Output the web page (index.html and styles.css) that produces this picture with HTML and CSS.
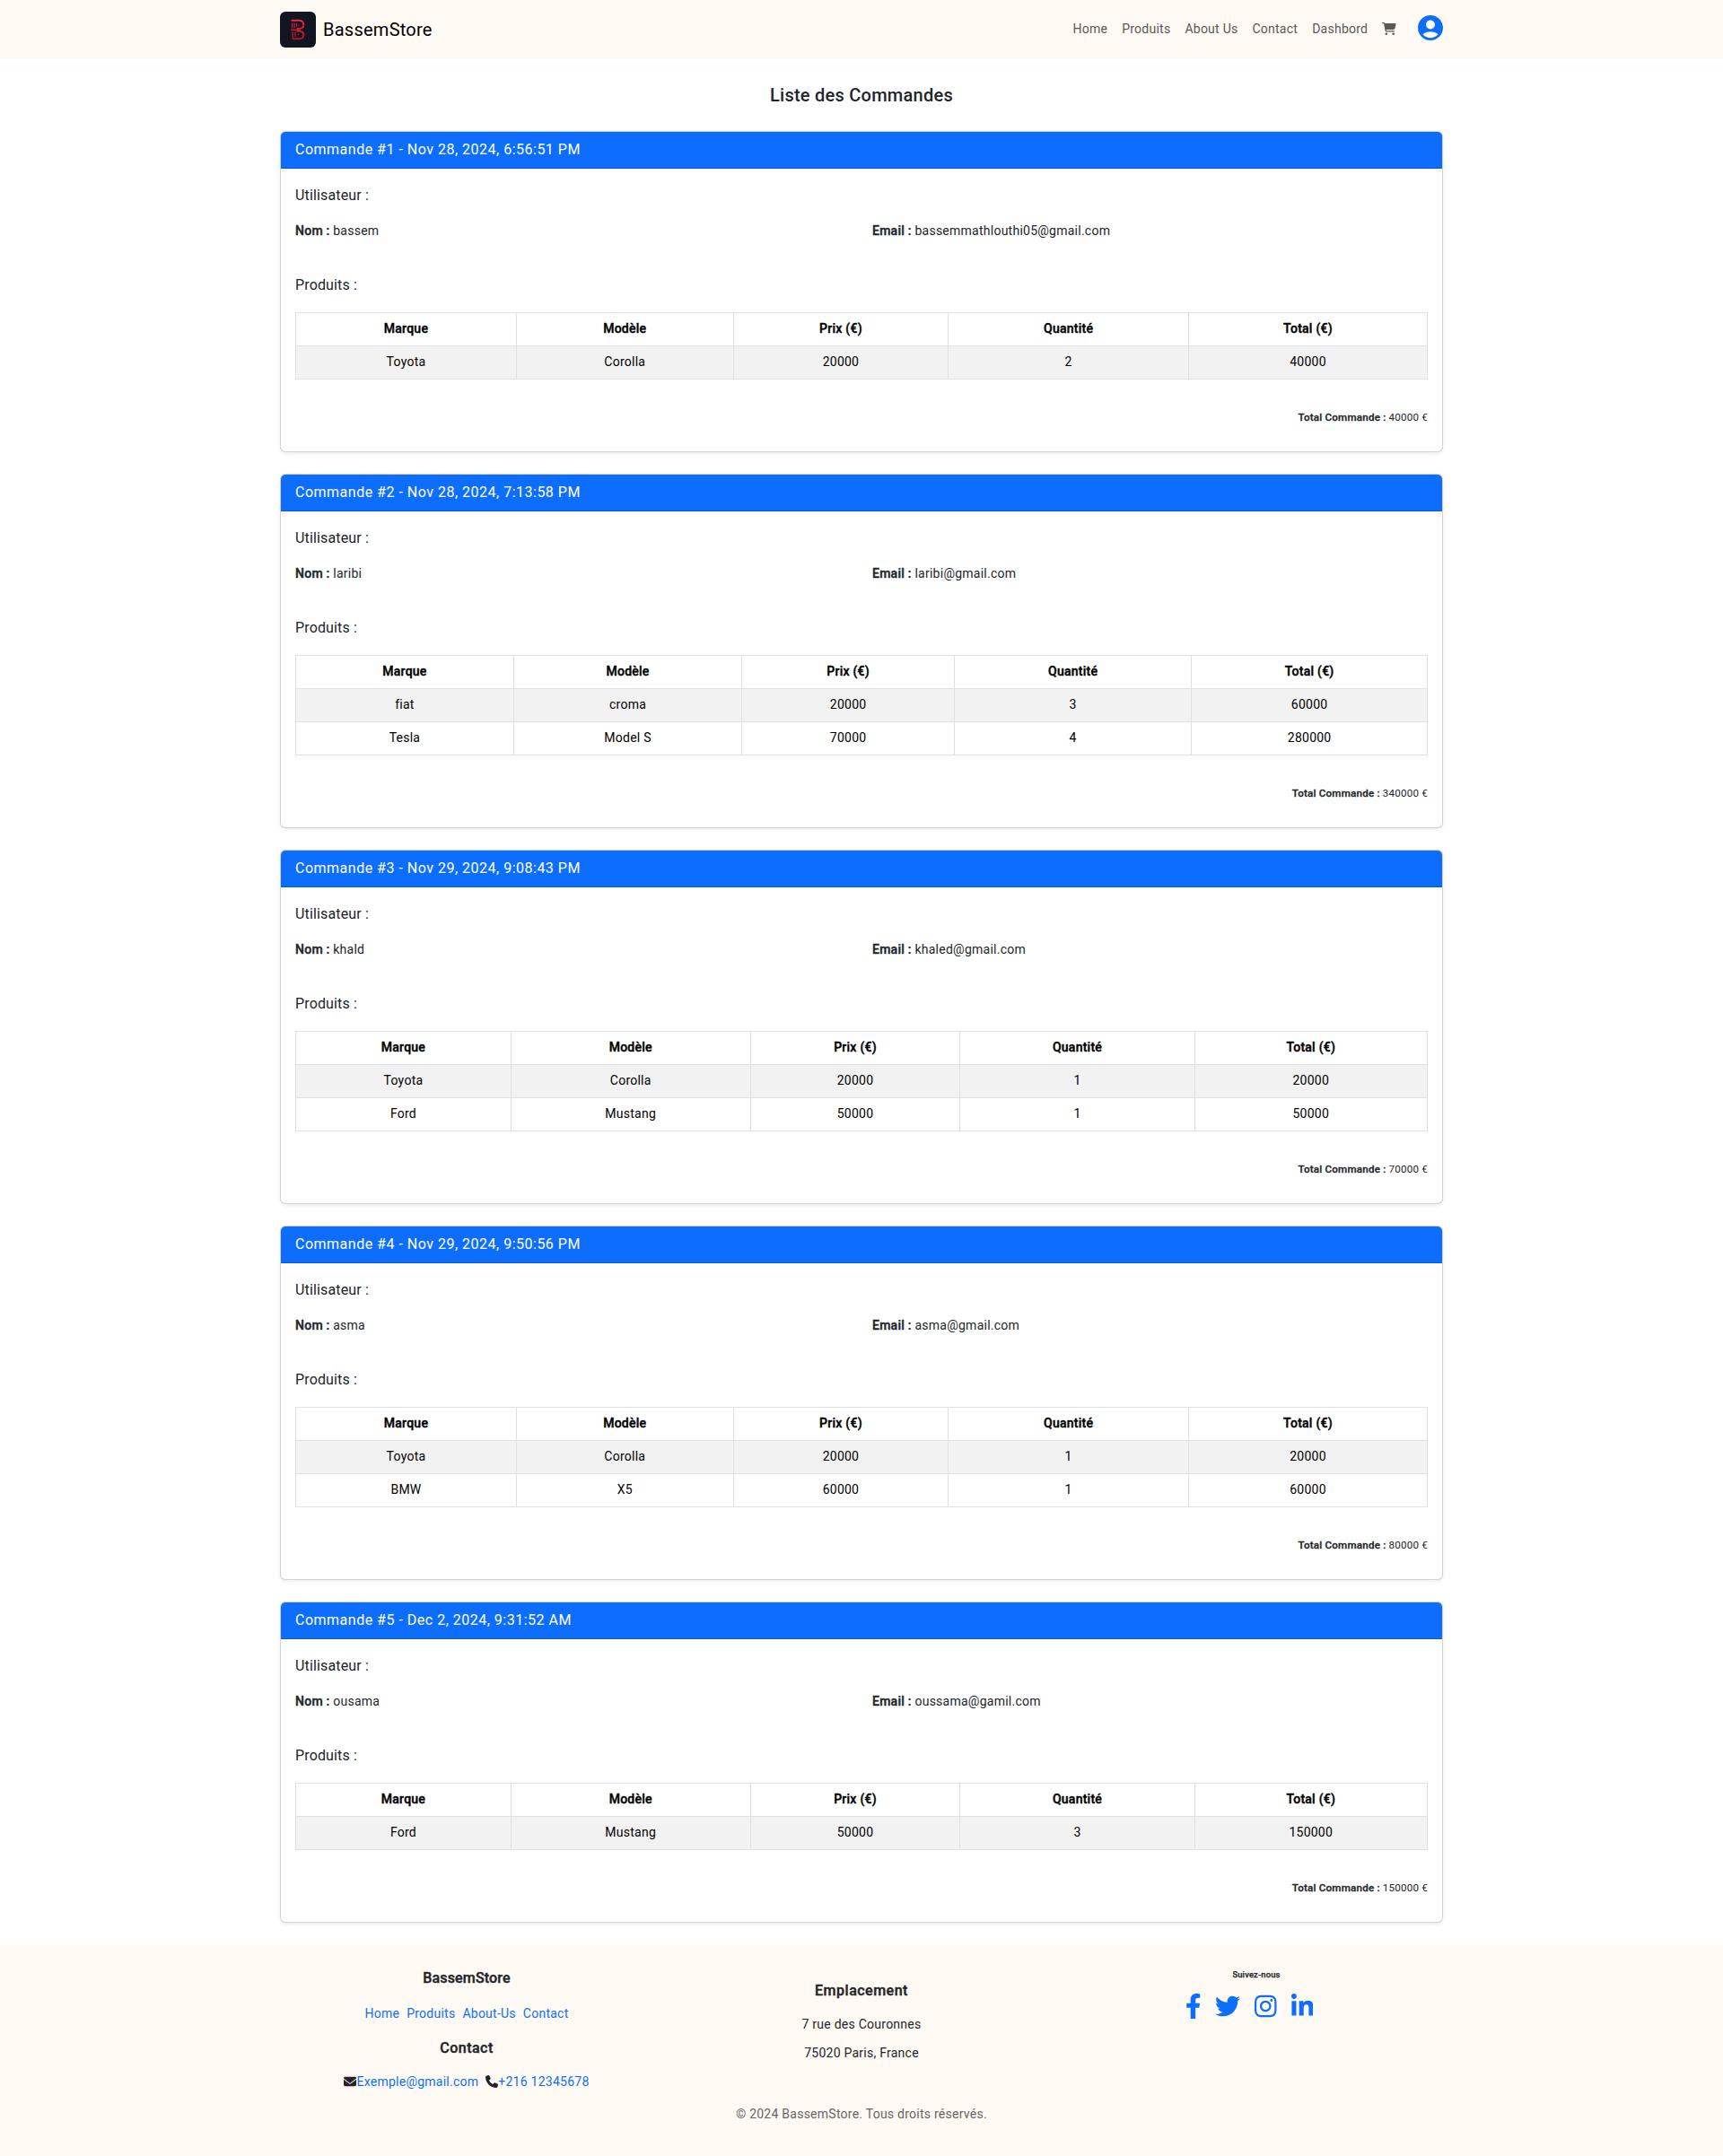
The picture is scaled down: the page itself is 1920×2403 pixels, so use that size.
FILE: index.html
```html
<!DOCTYPE html>
<html lang="fr">
<head>
<meta charset="utf-8">
<title>BassemStore</title>
<link rel="stylesheet" href="styles.css">
</head>
<body>
<header class="navbar">
  <div class="container navbar-inner">
    <a class="brand">
      <svg class="logo" viewBox="0 0 40 40">
        <defs><linearGradient id="red" x1="0" y1="9" x2="0" y2="31" gradientUnits="userSpaceOnUse"><stop offset="0" stop-color="#f6243b"/><stop offset="1" stop-color="#ac1428"/></linearGradient></defs>
        <rect width="40" height="40" rx="6" fill="#111521"/>
        <g fill="none" stroke="url(#red)">
          <path stroke-width="1.9" d="M12.500 9.800H21.500Q26.300 10.200 26.300 14.700Q26.200 18.500 22 18.900H18.500"/>
          <path stroke-width="1.9" d="M18.500 21.700H22Q26.400 22 26.400 26Q26.200 30.200 22 30.200H14"/>
          <path stroke-width="1.1" d="M13.600 12.500V18.500M16 12.500V18.500"/>
          <path stroke-width=".9" d="M18.500 12.800V17"/>
          <path stroke-width="1.600" d="M12 20.400H22.500"/>
          <path stroke-width="1.300" d="M14 22.500V30M17 22.500V28"/>
        </g>
        <circle cx="20.700" cy="15" r=".8" fill="#e01e35"/><circle cx="20.700" cy="25.500" r=".8" fill="#b5182c"/>
      </svg>
      <span>BassemStore</span>
    </a>
    <nav class="nav">
      <a>Home</a><a>Produits</a><a>About Us</a><a>Contact</a><a>Dashbord</a>
      <a class="cart"><svg viewBox="0 0 576 512"><path d="M0 24C0 10.700 10.700 0 24 0H69.500c22 0 41.500 12.800 50.600 32h411c26.300 0 45.500 25 38.600 50.400l-41 152.300c-8.500 31.400-37 53.300-69.500 53.300H170.700l5.400 28.500c2.200 11.300 12.100 19.500 23.600 19.500H488c13.300 0 24 10.700 24 24s-10.700 24-24 24H199.700c-34.600 0-64.300-24.600-70.700-58.500L77.400 54.500c-.7-3.800-4-6.500-7.900-6.500H24C10.700 48 0 37.300 0 24zM128 464a48 48 0 1 1 96 0 48 48 0 1 1 -96 0zm336-48a48 48 0 1 1 0 96 48 48 0 1 1 0-96z"/></svg></a>
    </nav>
    <svg class="account" viewBox="2 2 20 20"><path d="M12 2C6.480 2 2 6.480 2 12s4.480 10 10 10 10-4.480 10-10S17.520 2 12 2zm0 4c1.930 0 3.500 1.570 3.500 3.500S13.930 13 12 13s-3.500-1.570-3.500-3.500S10.070 6 12 6zm0 14c-2.030 0-4.430-.82-6.140-2.880C7.550 15.800 9.680 15 12 15s4.450.8 6.140 2.120C16.430 19.180 14.030 20 12 20z"/></svg>
  </div>
</header>

<main class="container">
  <h2 class="page-title">Liste des Commandes</h2>

  <section class="card">
    <h4 class="card-header">Commande #1 - Nov 28, 2024, 6:56:51 PM</h4>
    <div class="card-body">
      <h3>Utilisateur :</h3>
      <div class="user"><p><strong>Nom :</strong> bassem</p><p><strong>Email :</strong> bassemmathlouthi05@gmail.com</p></div>
      <h3>Produits :</h3>
      <table>
        <thead><tr><th>Marque</th><th>Modèle</th><th>Prix (€)</th><th>Quantité</th><th>Total (€)</th></tr></thead>
        <tbody><tr><td>Toyota</td><td>Corolla</td><td>20000</td><td>2</td><td>40000</td></tr></tbody>
      </table>
      <h5 class="total"><strong>Total Commande :</strong> 40000 €</h5>
    </div>
  </section>

  <section class="card">
    <h4 class="card-header">Commande #2 - Nov 28, 2024, 7:13:58 PM</h4>
    <div class="card-body">
      <h3>Utilisateur :</h3>
      <div class="user"><p><strong>Nom :</strong> laribi</p><p><strong>Email :</strong> laribi@gmail.com</p></div>
      <h3>Produits :</h3>
      <table>
        <thead><tr><th>Marque</th><th>Modèle</th><th>Prix (€)</th><th>Quantité</th><th>Total (€)</th></tr></thead>
        <tbody><tr><td>fiat</td><td>croma</td><td>20000</td><td>3</td><td>60000</td></tr>
        <tr><td>Tesla</td><td>Model S</td><td>70000</td><td>4</td><td>280000</td></tr></tbody>
      </table>
      <h5 class="total"><strong>Total Commande :</strong> 340000 €</h5>
    </div>
  </section>

  <section class="card">
    <h4 class="card-header">Commande #3 - Nov 29, 2024, 9:08:43 PM</h4>
    <div class="card-body">
      <h3>Utilisateur :</h3>
      <div class="user"><p><strong>Nom :</strong> khald</p><p><strong>Email :</strong> khaled@gmail.com</p></div>
      <h3>Produits :</h3>
      <table>
        <thead><tr><th>Marque</th><th>Modèle</th><th>Prix (€)</th><th>Quantité</th><th>Total (€)</th></tr></thead>
        <tbody><tr><td>Toyota</td><td>Corolla</td><td>20000</td><td>1</td><td>20000</td></tr>
        <tr><td>Ford</td><td>Mustang</td><td>50000</td><td>1</td><td>50000</td></tr></tbody>
      </table>
      <h5 class="total"><strong>Total Commande :</strong> 70000 €</h5>
    </div>
  </section>

  <section class="card">
    <h4 class="card-header">Commande #4 - Nov 29, 2024, 9:50:56 PM</h4>
    <div class="card-body">
      <h3>Utilisateur :</h3>
      <div class="user"><p><strong>Nom :</strong> asma</p><p><strong>Email :</strong> asma@gmail.com</p></div>
      <h3>Produits :</h3>
      <table>
        <thead><tr><th>Marque</th><th>Modèle</th><th>Prix (€)</th><th>Quantité</th><th>Total (€)</th></tr></thead>
        <tbody><tr><td>Toyota</td><td>Corolla</td><td>20000</td><td>1</td><td>20000</td></tr>
        <tr><td>BMW</td><td>X5</td><td>60000</td><td>1</td><td>60000</td></tr></tbody>
      </table>
      <h5 class="total"><strong>Total Commande :</strong> 80000 €</h5>
    </div>
  </section>

  <section class="card">
    <h4 class="card-header">Commande #5 - Dec 2, 2024, 9:31:52 AM</h4>
    <div class="card-body">
      <h3>Utilisateur :</h3>
      <div class="user"><p><strong>Nom :</strong> ousama</p><p><strong>Email :</strong> oussama@gamil.com</p></div>
      <h3>Produits :</h3>
      <table>
        <thead><tr><th>Marque</th><th>Modèle</th><th>Prix (€)</th><th>Quantité</th><th>Total (€)</th></tr></thead>
        <tbody><tr><td>Ford</td><td>Mustang</td><td>50000</td><td>3</td><td>150000</td></tr></tbody>
      </table>
      <h5 class="total"><strong>Total Commande :</strong> 150000 €</h5>
    </div>
  </section>
</main>

<footer class="footer">
  <div class="footer-cols">
    <div class="col">
      <h4 class="store">BassemStore</h4>
      <div class="links"><a>Home</a><a>Produits</a><a>About-Us</a><a>Contact</a></div>
      <h4 class="contact">Contact</h4>
      <div class="links">
        <span><svg class="fa" viewBox="0 0 512 512"><path d="M48 64C21.500 64 0 85.500 0 112c0 15.100 7.100 29.300 19.200 38.400L236.800 313.600c11.400 8.500 27 8.500 38.400 0L492.800 150.400c12.100-9.100 19.200-23.300 19.200-38.400c0-26.500-21.500-48-48-48H48zM0 176V384c0 35.300 28.700 64 64 64H448c35.300 0 64-28.700 64-64V176L294.400 339.200c-22.800 17.100-54 17.100-76.800 0L0 176z"/></svg><a>Exemple@gmail.com</a></span>
        <span><svg class="fa" viewBox="0 0 512 512"><path d="M164.900 24.600c-7.700-18.600-28-28.500-47.400-23.200l-88 24C12.100 30.200 0 46 0 64C0 311.400 200.600 512 448 512c18 0 33.800-12.100 38.600-29.500l24-88c5.300-19.400-4.600-39.700-23.200-47.400l-96-40c-16.300-6.800-35.200-2.100-46.300 11.600L304.700 368C234.300 334.700 177.300 277.700 144 207.300L193.300 167c13.700-11.200 18.400-30 11.600-46.300l-40-96z"/></svg><a>+216 12345678</a></span>
      </div>
    </div>
    <div class="col place">
      <h4>Emplacement</h4>
      <p>7 rue des Couronnes</p>
      <p>75020 Paris, France</p>
    </div>
    <div class="col">
      <h6>Suivez-nous</h6>
      <div class="social">
        <svg viewBox="0 0 320 512" style="width:17.500px"><path d="M279.140 288l14.220-92.660h-88.910v-60.130c0-25.350 12.420-50.060 52.240-50.060h40.420V6.260S260.430 0 225.360 0c-73.220 0-121.080 44.380-121.080 124.720v70.620H22.890V288h81.390v224h100.170V288z"/></svg>
        <svg viewBox="0 0 512 512" style="width:28px"><path d="M459.370 151.716c.325 4.548.325 9.097.325 13.645 0 138.720-105.583 298.558-298.558 298.558-59.452 0-114.680-17.219-161.137-47.106 8.447.974 16.568 1.299 25.340 1.299 49.055 0 94.213-16.568 130.274-44.832-46.132-.975-84.792-31.188-98.112-72.772 6.498.974 12.995 1.624 19.818 1.624 9.421 0 18.843-1.300 27.614-3.573-48.081-9.747-84.143-51.980-84.143-102.985v-1.299c13.969 7.797 30.214 12.670 47.431 13.319-28.264-18.843-46.781-51.005-46.781-87.391 0-19.492 5.197-37.360 14.294-52.954 51.655 63.675 129.300 105.258 216.365 109.807-1.624-7.797-2.599-15.918-2.599-24.040 0-57.828 46.782-104.934 104.934-104.934 30.213 0 57.502 12.670 76.670 33.137 23.715-4.548 46.456-13.320 66.599-25.340-7.798 24.366-24.366 44.833-46.132 57.827 21.117-2.273 41.584-8.122 60.426-16.243-14.292 20.791-32.161 39.308-52.628 54.253z"/></svg>
        <svg viewBox="0 0 448 512" style="width:24.500px"><path d="M224.100 141c-63.600 0-114.900 51.300-114.900 114.900s51.300 114.900 114.900 114.900S339 319.500 339 255.900 287.700 141 224.100 141zm0 189.600c-41.100 0-74.700-33.500-74.700-74.700s33.500-74.700 74.700-74.700 74.700 33.500 74.700 74.700-33.600 74.700-74.700 74.700zm146.400-194.300c0 14.900-12 26.800-26.800 26.800-14.900 0-26.800-12-26.800-26.800s12-26.800 26.800-26.800 26.800 12 26.800 26.800zm76.100 27.200c-1.700-35.900-9.900-67.700-36.200-93.900-26.200-26.200-58-34.400-93.900-36.200-37-2.100-147.900-2.100-184.900 0-35.800 1.700-67.600 9.900-93.900 36.100s-34.400 58-36.200 93.900c-2.100 37-2.100 147.900 0 184.900 1.700 35.900 9.900 67.700 36.200 93.900s58 34.400 93.900 36.200c37 2.100 147.900 2.100 184.900 0 35.900-1.700 67.700-9.900 93.900-36.200 26.200-26.200 34.400-58 36.200-93.900 2.100-37 2.100-147.800 0-184.800zM398.800 388c-7.800 19.600-22.900 34.700-42.600 42.600-29.500 11.700-99.500 9-132.100 9s-102.700 2.600-132.100-9c-19.600-7.800-34.700-22.900-42.600-42.600-11.700-29.500-9-99.500-9-132.100s-2.600-102.700 9-132.100c7.800-19.600 22.900-34.700 42.600-42.600 29.500-11.700 99.500-9 132.100-9s102.700-2.600 132.100 9c19.600 7.800 34.700 22.900 42.600 42.600 11.700 29.500 9 99.500 9 132.100s2.700 102.700-9 132.100z"/></svg>
        <svg viewBox="0 0 448 512" style="width:24.500px"><path d="M100.280 448H7.400V148.900h92.880zM53.790 108.100C24.090 108.100 0 83.500 0 53.800a53.790 53.790 0 0 1 107.580 0c0 29.700-24.100 54.300-53.790 54.300zM447.900 448h-92.680V302.400c0-34.700-.7-79.200-48.290-79.200-48.290 0-55.690 37.700-55.690 76.700V448h-92.780V148.900h89.080v40.800h1.300c12.400-23.500 42.690-48.300 87.880-48.300 94 0 111.280 61.900 111.280 142.300V448z"/></svg>
      </div>
    </div>
  </div>
  <p class="copyright">© 2024 BassemStore. Tous droits réservés.</p>
</footer>
</body>
</html>
```
FILE: styles.css
```css
* { box-sizing: border-box; }
body { margin: 0; font: 400 14px/20px Roboto, "Liberation Sans", sans-serif; letter-spacing: .0178571429em; color: #212529; background: #fff; }
h2, h3, h4, h5, h6, p { margin: 0; }
svg { display: block; }
strong, th, .footer h4, .footer h6 { font-weight: 500; -webkit-text-stroke: .4px currentColor; }
.container { width: 1296px; margin: 0 auto; }
.navbar { background: #fffaf3; height: 66px; }
.navbar-inner { display: flex; align-items: center; height: 66px; }
.brand { display: flex; align-items: center; gap: 8px; font-size: 20px; line-height: 30px; color: #000; margin-right: auto; }
.logo { width: 40px; height: 40px; }
.nav { display: flex; align-items: center; gap: 16px; color: #595855; margin-right: 24px; padding-bottom: 2px; }
.cart svg { width: 15.750px; height: 14px; fill: #595855; }
.account { width: 28px; height: 28px; fill: #0d6efd; margin-top: -4px; }
.page-title { margin: 24px 0; font: 500 20px/32px Roboto, sans-serif; letter-spacing: .0125em; text-align: center; }
.card { border: 1px solid rgba(0,0,0,.175); border-radius: 6px; background: #fff; box-shadow: 0 2px 4px rgba(0,0,0,.075); margin-bottom: 24px; }
.card-header { padding: 8px 16px; background: #0d6efd; color: #fff; border-bottom: 1px solid rgba(0,0,0,.175); border-radius: 5px 5px 0 0; font: 400 16px/24px Roboto, sans-serif; letter-spacing: .03125em; }
.card-body { padding: 16px; }
h3 { font: 400 16px/28px Roboto, sans-serif; letter-spacing: .009375em; margin-bottom: 15px; }
.user { display: grid; grid-template-columns: 1fr 1fr; column-gap: 24px; margin-bottom: 37px; }
table { width: 100%; border-collapse: collapse; text-align: center; color: #000; margin-top: 16px; }
th, td { padding: 7px 8px 9px; border: 1px solid #dee2e6; }
tbody tr:nth-child(odd) { background: #f2f2f2; }
.total { margin: 32px 0 12px; font: 400 11.620px/20px Roboto, sans-serif; letter-spacing: .0178571429em; text-align: right; }
.total strong { -webkit-text-stroke-width: .3px; }
.footer { background: #fffaf3; height: 236px; }
.footer-cols { width: 1320px; margin: 0 auto; display: grid; grid-template-columns: repeat(3, 1fr); text-align: center; height: 179px; padding-top: 24px; }
.footer h4 { font-size: 16px; line-height: 24px; letter-spacing: .03125em; margin-bottom: 15px; }
.footer .store { letter-spacing: .009375em; padding-top: 2px; }
.footer .contact { margin-bottom: 13px; }
.links { display: flex; justify-content: center; gap: 8px; color: #0d6efd; margin-bottom: 15px; line-height: 24px; }
.links span { display: flex; align-items: center; }
.fa { width: 14px; height: 14px; fill: #212529; }
.place { padding-top: 16px; }
.place p { margin-bottom: 12px; }
.footer h6 { font-size: 9.380px; line-height: 20px; letter-spacing: .0178571429em; margin-bottom: 11px; -webkit-text-stroke-width: .25px; }
.social { display: flex; justify-content: center; gap: 16px; padding-right: 16px; fill: #0d6efd; }
.social svg { height: 28px; }
.copyright { text-align: center; color: #656565; }
```
